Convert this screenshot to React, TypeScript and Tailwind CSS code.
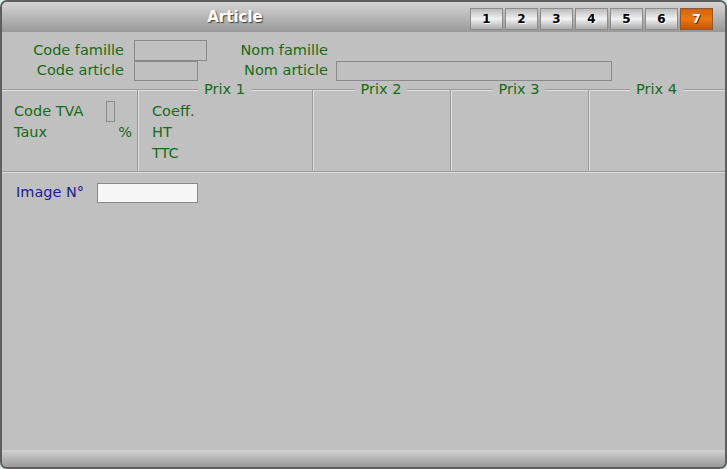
const green = 'text-[#156c15]';

const tabs = ['1', '2', '3', '4', '5', '6', '7'];

const Box = ({ className }: { className: string }) => (
  <div className={`border border-[#8a8a8a] ${className}`} />
);

const PriceColumn = ({ title, children, first }: { title?: string; children?: React.ReactNode; first?: boolean }) => (
  <div className="flex flex-col">
    <div className="h-[16px] flex justify-center items-center">
      {title && <span className={`relative z-10 bg-[#c0c0c0] px-[6px] leading-[16px] ${green}`}>{title}</span>}
    </div>
    <div
      className={`-mt-[8px] h-[82px] border-t border-[#9c9c9c] ${
        first ? 'shadow-[inset_0_1px_0_#dedede]' : 'border-l shadow-[inset_1px_1px_0_#dedede]'
      }`}
    >
      {children}
    </div>
  </div>
);

const App = () => {
  return (
    <div className="w-[727px] h-[469px] bg-[#d6ece8] font-['DejaVu_Sans',sans-serif] text-[14.5px]">
      <div className="h-full flex flex-col border-2 border-[#5e5e5e] rounded-[7px] overflow-hidden bg-[#c0c0c0]">
        {/* title bar */}
        <div className="h-[30px] shrink-0 flex bg-gradient-to-b from-[#d6d6d6] to-[#989898]">
          <div className="w-[466px] text-center font-bold text-[15px] text-white leading-[30px] [text-shadow:1px_1px_1px_#3a3a3a]">
            Article
          </div>
          <div className="ml-[2px] pt-[6px] flex gap-[2px]">
            {tabs.map((t) => (
              <div
                key={t}
                className={`w-[33px] h-[22px] flex items-center justify-center border font-bold text-[12px] ${
                  t === '7'
                    ? 'border-[#8a5a30] bg-gradient-to-b from-[#d86000] via-[#f07810] to-[#c85400] text-white [text-shadow:1px_1px_0_#6a3000]'
                    : 'border-[#8c8c8c] bg-gradient-to-b from-[#bcbcbc] via-[#f2f2f2] to-[#acacac] text-black [text-shadow:1px_1px_0_#ffffff]'
                }`}
              >
                {t}
              </div>
            ))}
          </div>
        </div>

        {/* body */}
        <div className="flex-1 flex flex-col">
          <div className={`pt-[8px] ${green}`}>
            <div className="h-[21px] flex items-center">
              <div className="w-[122px] text-right">Code famille</div>
              <Box className="ml-[10px] w-[73px] h-[21px]" />
              <div className="w-[121px] text-right">Nom famille</div>
            </div>
            <div className="h-[20px] flex items-center">
              <div className="w-[122px] text-right">Code article</div>
              <Box className="ml-[10px] w-[64px] h-[20px]" />
              <div className="w-[130px] text-right">Nom article</div>
              <Box className="ml-[8px] w-[276px] h-[20px]" />
            </div>
          </div>

          <div className={`grid grid-cols-[135px_175px_138px_138px_137px] border-b border-[#9c9c9c] ${green}`}>
            <PriceColumn first>
              <div className="pt-[11px] pl-[12px] pr-[5px]">
                <div className="h-[21px] flex items-center">
                  <div className="w-[92px]">Code TVA</div>
                  <Box className="w-[9px] h-[21px]" />
                </div>
                <div className="h-[21px] flex items-center justify-between">
                  <span>Taux</span>
                  <span>%</span>
                </div>
              </div>
            </PriceColumn>
            <PriceColumn title="Prix 1">
              <div className="pt-[11px] pl-[14px]">
                <div className="h-[21px] flex items-center">Coeff.</div>
                <div className="h-[21px] flex items-center">HT</div>
                <div className="h-[21px] flex items-center">TTC</div>
              </div>
            </PriceColumn>
            <PriceColumn title="Prix 2" />
            <PriceColumn title="Prix 3" />
            <PriceColumn title="Prix 4" />
          </div>
          <div className="h-px bg-[#dedede]" />

          <div className="pt-[10px] pl-[14px] h-[20px] box-content flex items-center">
            <div className="w-[81px] text-[#20208a]">Image N°</div>
            <div className="w-[101px] h-[20px] border border-[#8a8a8a] bg-[#f6f6f6]" />
          </div>
        </div>

        {/* bottom bar */}
        <div className="h-[17px] shrink-0 bg-gradient-to-b from-[#d2d2d2] to-[#9a9a9a]" />
      </div>
    </div>
  );
};

export default App;
